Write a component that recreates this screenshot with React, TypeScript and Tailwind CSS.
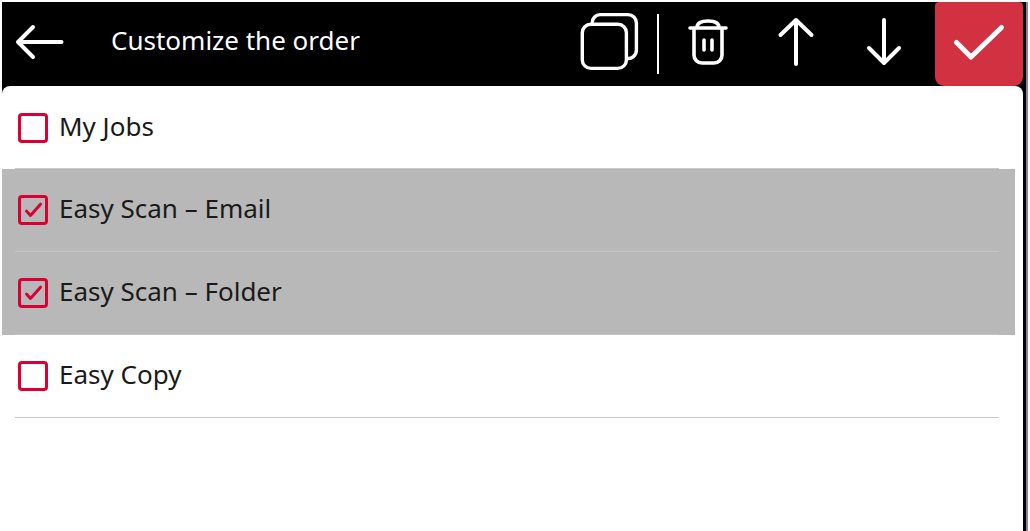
const rows = [
  { label: 'My Jobs', checked: false },
  { label: 'Easy Scan – Email', checked: true },
  { label: 'Easy Scan – Folder', checked: true },
  { label: 'Easy Copy', checked: false },
];

function Checkbox({ checked }: { checked: boolean }) {
  return (
    <div className="w-[30px] h-[30px] shrink-0 rounded-[4px] border-[3px] border-[#dc0032] flex items-center justify-center">
      {checked && (
        <svg width="24" height="24" viewBox="0 0 24 24" fill="none" stroke="#dc0032" strokeWidth="3" strokeLinecap="round" strokeLinejoin="round">
          <path d="M5.5 13 L9.5 17.5 L19.5 6.2" />
        </svg>
      )}
    </div>
  );
}

export default function App() {
  return (
    <div className="w-[1030px] h-[531px] overflow-hidden bg-white pt-[2px] pl-[2px] pr-[2px] font-['Noto_Sans',sans-serif]">
      <div className="h-full bg-black border-r-2 border-[#7f86a6]">
        {/* Header */}
        <div className="h-[84px] flex items-start mr-[3px] text-white">
          <svg className="ml-[13px] mt-[20px]" width="52" height="42" viewBox="0 0 52 42" fill="none" stroke="white" strokeWidth="4" strokeLinecap="round" strokeLinejoin="round">
            <path d="M46.5 20 H3 M18 5 L3 20 L18 35" />
          </svg>
          <span className="ml-[44px] mt-[20px] w-[248px] whitespace-nowrap text-[26px] leading-[36px] text-white">Customize the order</span>
          <svg className="ml-[220px] mt-[10px]" width="62" height="60" viewBox="0 0 62 60" fill="none" stroke="white" strokeWidth="3.4" strokeLinejoin="round">
            <rect x="3.3" y="12.3" width="44.1" height="44.1" rx="8.5" />
            <path d="M13.3 12 V10.5 A8 8 0 0 1 21 2.6 H49 A8.4 8.4 0 0 1 57.4 11 V38 A8.4 8.4 0 0 1 47.4 46.4" />
          </svg>
          <div className="w-[2px] h-[60px] mt-[12px] ml-[16px] bg-white" />
          <svg className="ml-[27px] mt-[16px]" width="44" height="52" viewBox="0 0 44 52" fill="none" stroke="white" strokeWidth="3.6" strokeLinecap="round" strokeLinejoin="round">
            <path d="M4 10 H40 M8 10 V37 A8 8 0 0 0 16 45 H28 A8 8 0 0 0 36 37 V10" />
            <path d="M11 9.5 C11 5 15 3 22 3 C29 3 33 5 33 9.5" />
            <path d="M18 22 V32 M26 22 V32" />
          </svg>
          <svg className="ml-[45px] mt-[15px]" width="42" height="54" viewBox="0 0 42 54" fill="none" stroke="white" strokeWidth="4" strokeLinecap="round" strokeLinejoin="round">
            <path d="M21 3 V47 M5.5 18 L21 3 L36.5 18" />
          </svg>
          <svg className="ml-[46px] mt-[15px]" width="42" height="54" viewBox="0 0 42 54" fill="none" stroke="white" strokeWidth="4" strokeLinecap="round" strokeLinejoin="round">
            <path d="M21 3 V46 M6 31 L21 46 L36 31" />
          </svg>
          <div className="ml-[30px] w-[88px] h-[84px] shrink-0 bg-[#d13140] rounded-b-[9px] rounded-t-[4px] flex items-center justify-center">
            <svg width="56" height="44" viewBox="0 0 56 44" fill="none" stroke="white" strokeWidth="5" strokeLinecap="round" strokeLinejoin="round">
              <path d="M5.5 20.5 L20 35 L50.5 5.5" />
            </svg>
          </div>
        </div>

        {/* List */}
        <div className="mr-[3px] h-[445px] bg-white rounded-t-[8px]">
          {rows.map((row, i) => (
            <div key={row.label} className={`h-[83px] mr-[8px] ${row.checked ? 'bg-[#b8b8b8]' : ''}`}>
              <div className={`h-[82px] flex items-center gap-[11px] pl-[16px] ${i === 0 ? 'pt-[2px]' : ''}`}>
                <Checkbox checked={row.checked} />
                <span className="text-[26px] leading-[34px] text-[#1a1a1a] -mt-[5px]">{row.label}</span>
              </div>
              <div className={`h-px ml-[13px] mr-[16px] ${row.checked ? 'bg-[#c4c4c4]' : 'bg-[#c8c8c8]'}`} />
            </div>
          ))}
        </div>
      </div>
    </div>
  );
}
